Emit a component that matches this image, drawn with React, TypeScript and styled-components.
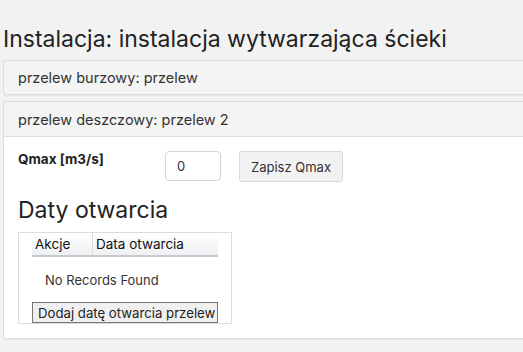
import React from "react";
import styled, { createGlobalStyle } from "styled-components";

const GlobalStyle = createGlobalStyle`
  html, body {
    margin: 0;
    padding: 0;
    background: #f2f2f2;
    overflow: hidden;
  }
  body {
    font-family: "Inter", "Open Sans", sans-serif;
    color: #333;
  }
`;

export default function App() {
  return (
    <>
      <GlobalStyle />
      <Page>
        <Title>Instalacja: instalacja wytwarzająca ścieki</Title>
        <Panel>
          <PanelHeader>przelew burzowy: przelew</PanelHeader>
        </Panel>
        <Panel>
          <PanelHeader open>przelew deszczowy: przelew 2</PanelHeader>
          <PanelBody>
            <QmaxRow>
              <Label>Qmax [m3/s]</Label>
              <Input defaultValue="0" />
              <Button>Zapisz Qmax</Button>
            </QmaxRow>
            <Subtitle>Daty otwarcia</Subtitle>
            <TableBox>
              <HeadRow>
                <HeadCell width={57}>Akcje</HeadCell>
                <HeadCell>Data otwarcia</HeadCell>
              </HeadRow>
              <Empty>No Records Found</Empty>
              <AddButton>Dodaj datę otwarcia przelew</AddButton>
            </TableBox>
          </PanelBody>
        </Panel>
      </Page>
    </>
  );
}

const Page = styled.div`
  padding: 0 0 0 3px;
  width: 560px;
`;

const Title = styled.h2`
  font-size: 23px;
  font-weight: 400;
  line-height: 30px;
  margin: 24px 0 6px 0;
  color: #222;
`;

const Panel = styled.div`
  border: 1px solid #dcdcdc;
  border-radius: 3px;
  background: #f4f4f4;
  box-shadow: 0 1px 1px rgba(0, 0, 0, 0.05);
  margin-bottom: 6px;
  overflow: hidden;
`;

const PanelHeader = styled.div<{ open?: boolean }>`
  height: ${(p) => (p.open ? 34 : 33)}px;
  display: flex;
  align-items: center;
  padding-left: 14px;
  font-size: 14.5px;
  color: #333;
  border-bottom: ${(p) => (p.open ? "1px solid #dcdcdc" : "none")};
`;

const PanelBody = styled.div`
  background: #fff;
  padding: 14px 14px 14px 14px;
`;

const QmaxRow = styled.div`
  display: flex;
  align-items: flex-start;
`;

const Label = styled.div`
  width: 147px;
  font-size: 13.5px;
  font-weight: 700;
  color: #222;
`;

const Input = styled.input`
  box-sizing: border-box;
  width: 56px;
  height: 30px;
  border: 1px solid #d4d4d4;
  border-radius: 4px;
  padding: 0 11px;
  font: inherit;
  font-size: 13px;
  color: #333;
  margin-right: 18px;
  outline: none;
`;

const Button = styled.button`
  box-sizing: border-box;
  height: 31px;
  padding: 0 11px;
  background: #f2f2f2;
  border: 1px solid #d8d8d8;
  border-radius: 3px;
  font: inherit;
  font-size: 13px;
  color: #333;
`;

const Subtitle = styled.h3`
  font-size: 23px;
  font-weight: 400;
  line-height: 30px;
  margin: 13px 0 7px 0;
  color: #222;
`;

const TableBox = styled.div`
  box-sizing: border-box;
  width: 214px;
  border: 1px solid #dcdcdc;
  padding: 0 13px 0 13px;
`;

const HeadRow = styled.div`
  display: flex;
  height: 22px;
  border-bottom: 2px solid #c8c8c8;
  background: linear-gradient(#fff, #eef0f3);
`;

const HeadCell = styled.div<{ width?: number }>`
  ${(p) => (p.width ? `width: ${p.width}px;` : "flex: 1;")}
  display: flex;
  align-items: center;
  padding-left: 3px;
  font-size: 13.5px;
  color: #111;
  & + & {
    border-left: 1px solid #dcdcdc;
  }
`;

const Empty = styled.div`
  height: 45px;
  display: flex;
  align-items: center;
  padding-left: 13px;
  font-size: 13px;
  color: #333;
`;

const AddButton = styled.button`
  display: block;
  box-sizing: border-box;
  width: 186px;
  height: 21px;
  padding: 0 3px 0 5px;
  text-align: left;
  white-space: nowrap;
  overflow: hidden;
  background: #f0f0f0;
  border: 1px solid #767676;
  border-radius: 0;
  font: inherit;
  font-size: 13.2px;
  color: #222;
`;
